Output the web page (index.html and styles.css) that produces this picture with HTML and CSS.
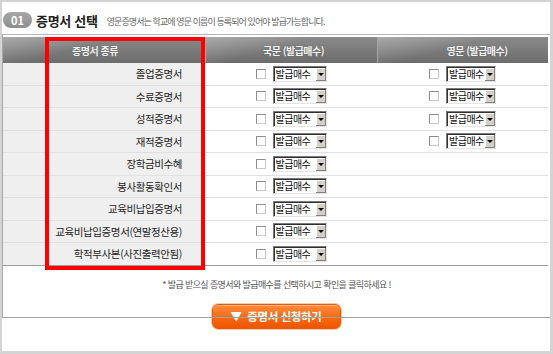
FILE: index.html
```html
<!DOCTYPE html>
<html lang="ko">
<head>
  <meta charset="UTF-8">
  <title>증명서 선택</title>
  <link rel="stylesheet" href="styles.css">
</head>
<body>
  <div class="frame">
    <div class="title-bar">
      <span class="step">01</span>
      <h2 class="title">증명서 선택</h2>
      <span class="desc">영문증명서는 학교에 영문 이름이 등록되어 있어야 발급가능합니다.</span>
    </div>

    <div class="panel">
      <div class="cert-table">
        <div class="thead">
          <div class="th th-name">증명서 종류</div>
          <div class="th th-kr">국문 (발급매수)</div>
          <div class="th th-en">영문 (발급매수)</div>
        </div>

        <div class="row">
          <div class="name">졸업증명서</div>
          <div class="cell"><input type="checkbox" class="chk"><span class="sel sel-kr"><select><option>발급매수</option></select></span></div>
          <div class="cell"><input type="checkbox" class="chk"><span class="sel sel-en"><select><option>발급매수</option></select></span></div>
        </div>
        <div class="row">
          <div class="name">수료증명서</div>
          <div class="cell"><input type="checkbox" class="chk"><span class="sel sel-kr"><select><option>발급매수</option></select></span></div>
          <div class="cell"><input type="checkbox" class="chk"><span class="sel sel-en"><select><option>발급매수</option></select></span></div>
        </div>
        <div class="row">
          <div class="name">성적증명서</div>
          <div class="cell"><input type="checkbox" class="chk"><span class="sel sel-kr"><select><option>발급매수</option></select></span></div>
          <div class="cell"><input type="checkbox" class="chk"><span class="sel sel-en"><select><option>발급매수</option></select></span></div>
        </div>
        <div class="row">
          <div class="name">재적증명서</div>
          <div class="cell"><input type="checkbox" class="chk"><span class="sel sel-kr"><select><option>발급매수</option></select></span></div>
          <div class="cell"><input type="checkbox" class="chk"><span class="sel sel-en"><select><option>발급매수</option></select></span></div>
        </div>
        <div class="row">
          <div class="name">장학금비수혜</div>
          <div class="cell"><input type="checkbox" class="chk"><span class="sel sel-kr"><select><option>발급매수</option></select></span></div>
          <div class="cell"></div>
        </div>
        <div class="row">
          <div class="name">봉사활동확인서</div>
          <div class="cell"><input type="checkbox" class="chk"><span class="sel sel-kr"><select><option>발급매수</option></select></span></div>
          <div class="cell"></div>
        </div>
        <div class="row">
          <div class="name">교육비납입증명서</div>
          <div class="cell"><input type="checkbox" class="chk"><span class="sel sel-kr"><select><option>발급매수</option></select></span></div>
          <div class="cell"></div>
        </div>
        <div class="row">
          <div class="name">교육비납입증명서(연말정산용)</div>
          <div class="cell"><input type="checkbox" class="chk"><span class="sel sel-kr"><select><option>발급매수</option></select></span></div>
          <div class="cell"></div>
        </div>
        <div class="row">
          <div class="name">학적부사본(사진출력안됨)</div>
          <div class="cell"><input type="checkbox" class="chk"><span class="sel sel-kr"><select><option>발급매수</option></select></span></div>
          <div class="cell"></div>
        </div>
      </div>

      <div class="highlight"></div>

      <p class="note">* 발급 받으실 증명서와 발급매수를 선택하시고 확인을 클릭하세요 !</p>
    </div>

    <div class="actions">
      <button type="button" class="btn-apply">▼&nbsp; 증명서 신청하기</button>
    </div>
  </div>
</body>
</html>
```

FILE: styles.css
```css
body {
  margin: 0;
  background: #fff;
  font-family: "Noto Sans CJK KR", "Noto Sans", sans-serif;
  color: #333;
}
.frame {
  box-sizing: border-box;
  width: 553px;
  height: 354px;
  border-style: solid;
  border-color: #d4d4d4;
  border-width: 2px 3px 3px 2px;
  background: #fff;
}

/* title */
.title-bar {
  display: flex;
  align-items: center;
  height: 28px;
  padding-top: 4px;
  padding-left: 1px;
}
.step {
  display: inline-block;
  width: 29px;
  height: 16px;
  line-height: 16px;
  border-radius: 8px;
  background: linear-gradient(#a8a8a8, #8e8e8e);
  color: #fff;
  font-size: 11px;
  font-weight: bold;
  text-align: center;
}
.title {
  margin: 0 0 0 4px;
  font-size: 13px;
  font-weight: bold;
  color: #222;
  letter-spacing: -0.3px;
}
.desc {
  margin: 3px 0 0 9px;
  font-size: 9px;
  color: #666;
  letter-spacing: -0.9px;
}

/* panel */
.panel {
  position: relative;
  border-top: 1px solid #b8b8b8;
  border-left: 1px solid #a8a8a8;
  border-bottom: 1px solid #a0a0a0;
  padding-top: 2px;
}
.cert-table {
  margin-right: 2px;
}
.thead,
.row {
  display: grid;
  grid-template-columns: 202px 172px 1fr;
}
.thead {
  height: 26px;
  background: linear-gradient(#8a8a8a, #6c6c6c);
}
.th {
  display: flex;
  align-items: center;
  justify-content: center;
  font-size: 10px;
  font-weight: bold;
  color: #f4f4f4;
  letter-spacing: -0.5px;
  text-shadow: 0 0 1px #555;
  background: linear-gradient(165deg, rgba(255,255,255,0.28) 0, rgba(255,255,255,0) 30px);
}
.th-name {
  padding-right: 18px;
}
.th-kr {
  padding-left: 4px;
  border-left: 1px solid #a6a6a6;
}
.th-en {
  padding-left: 28px;
  border-left: 1px solid #a6a6a6;
}

.row {
  box-sizing: border-box;
  height: 22.5px;
  border-bottom: 1px solid #e0e0e0;
}
.row:first-of-type {
  height: 25px;
}
.row:last-child {
  border-bottom-color: #9c9c9c;
}
.name {
  display: flex;
  align-items: center;
  justify-content: flex-end;
  padding-right: 23px;
  background: #efefef;
  font-size: 10.5px;
  color: #1e1e1e;
  letter-spacing: -0.4px;
}
.cell {
  display: flex;
  align-items: center;
  justify-content: center;
  gap: 7px;
}
.chk {
  appearance: none;
  width: 10px;
  height: 10px;
  margin: 0;
  border: 1px solid #8e8e8e;
  border-right-color: #c8c8c8;
  border-bottom-color: #c8c8c8;
  background: #fff;
}

/* old style select box */
.sel {
  position: relative;
  display: block;
  box-sizing: border-box;
  height: 16px;
  border: 1px solid;
  border-color: #7a7a7a #e4e4e4 #e4e4e4 #7a7a7a;
  box-shadow: inset 1px 1px 0 #303030;
  background: #fff;
}
.sel-kr {
  width: 54px;
}
.sel-en {
  width: 50px;
}
.sel select {
  display: block;
  appearance: none;
  box-sizing: border-box;
  width: 100%;
  height: 14px;
  margin: 0;
  padding: 0 0 0 2px;
  border: 0;
  background: transparent;
  font-family: inherit;
  font-size: 10px;
  line-height: 14px;
  color: #111;
  letter-spacing: -0.5px;
}
.sel::after {
  content: "";
  position: absolute;
  top: 1px;
  right: 0;
  width: 10px;
  height: 13px;
  background: #d4d0c8;
  box-shadow: inset -1px -1px 0 #808080, inset 1px 1px 0 #fff;
}
.sel::before {
  content: "";
  position: absolute;
  z-index: 1;
  top: 6px;
  right: 2px;
  border-left: 3px solid transparent;
  border-right: 3px solid transparent;
  border-top: 3px solid #000;
}

.highlight {
  position: absolute;
  left: 42px;
  top: 2px;
  box-sizing: border-box;
  width: 160px;
  height: 233px;
  border: 4px solid #f00;
}

.note {
  margin: 0;
  padding: 12px 0 25px;
  line-height: 14px;
  text-align: center;
  font-size: 9px;
  color: #555;
  letter-spacing: -0.6px;
}

.actions {
  display: flex;
  justify-content: center;
  margin-top: -14px;
}
.btn-apply {
  width: 129px;
  height: 25px;
  padding: 0;
  border: 1px solid #e5590f;
  border-radius: 6px;
  background: linear-gradient(#ff8b3d, #f76a12 55%, #ee5500);
  box-shadow: 0 0 0 1px #ffc9a3, inset 0 1px 0 rgba(255,255,255,0.35);
  color: #fff;
  font-family: inherit;
  font-size: 11.5px;
  font-weight: bold;
  letter-spacing: -0.4px;
  cursor: pointer;
}
```
